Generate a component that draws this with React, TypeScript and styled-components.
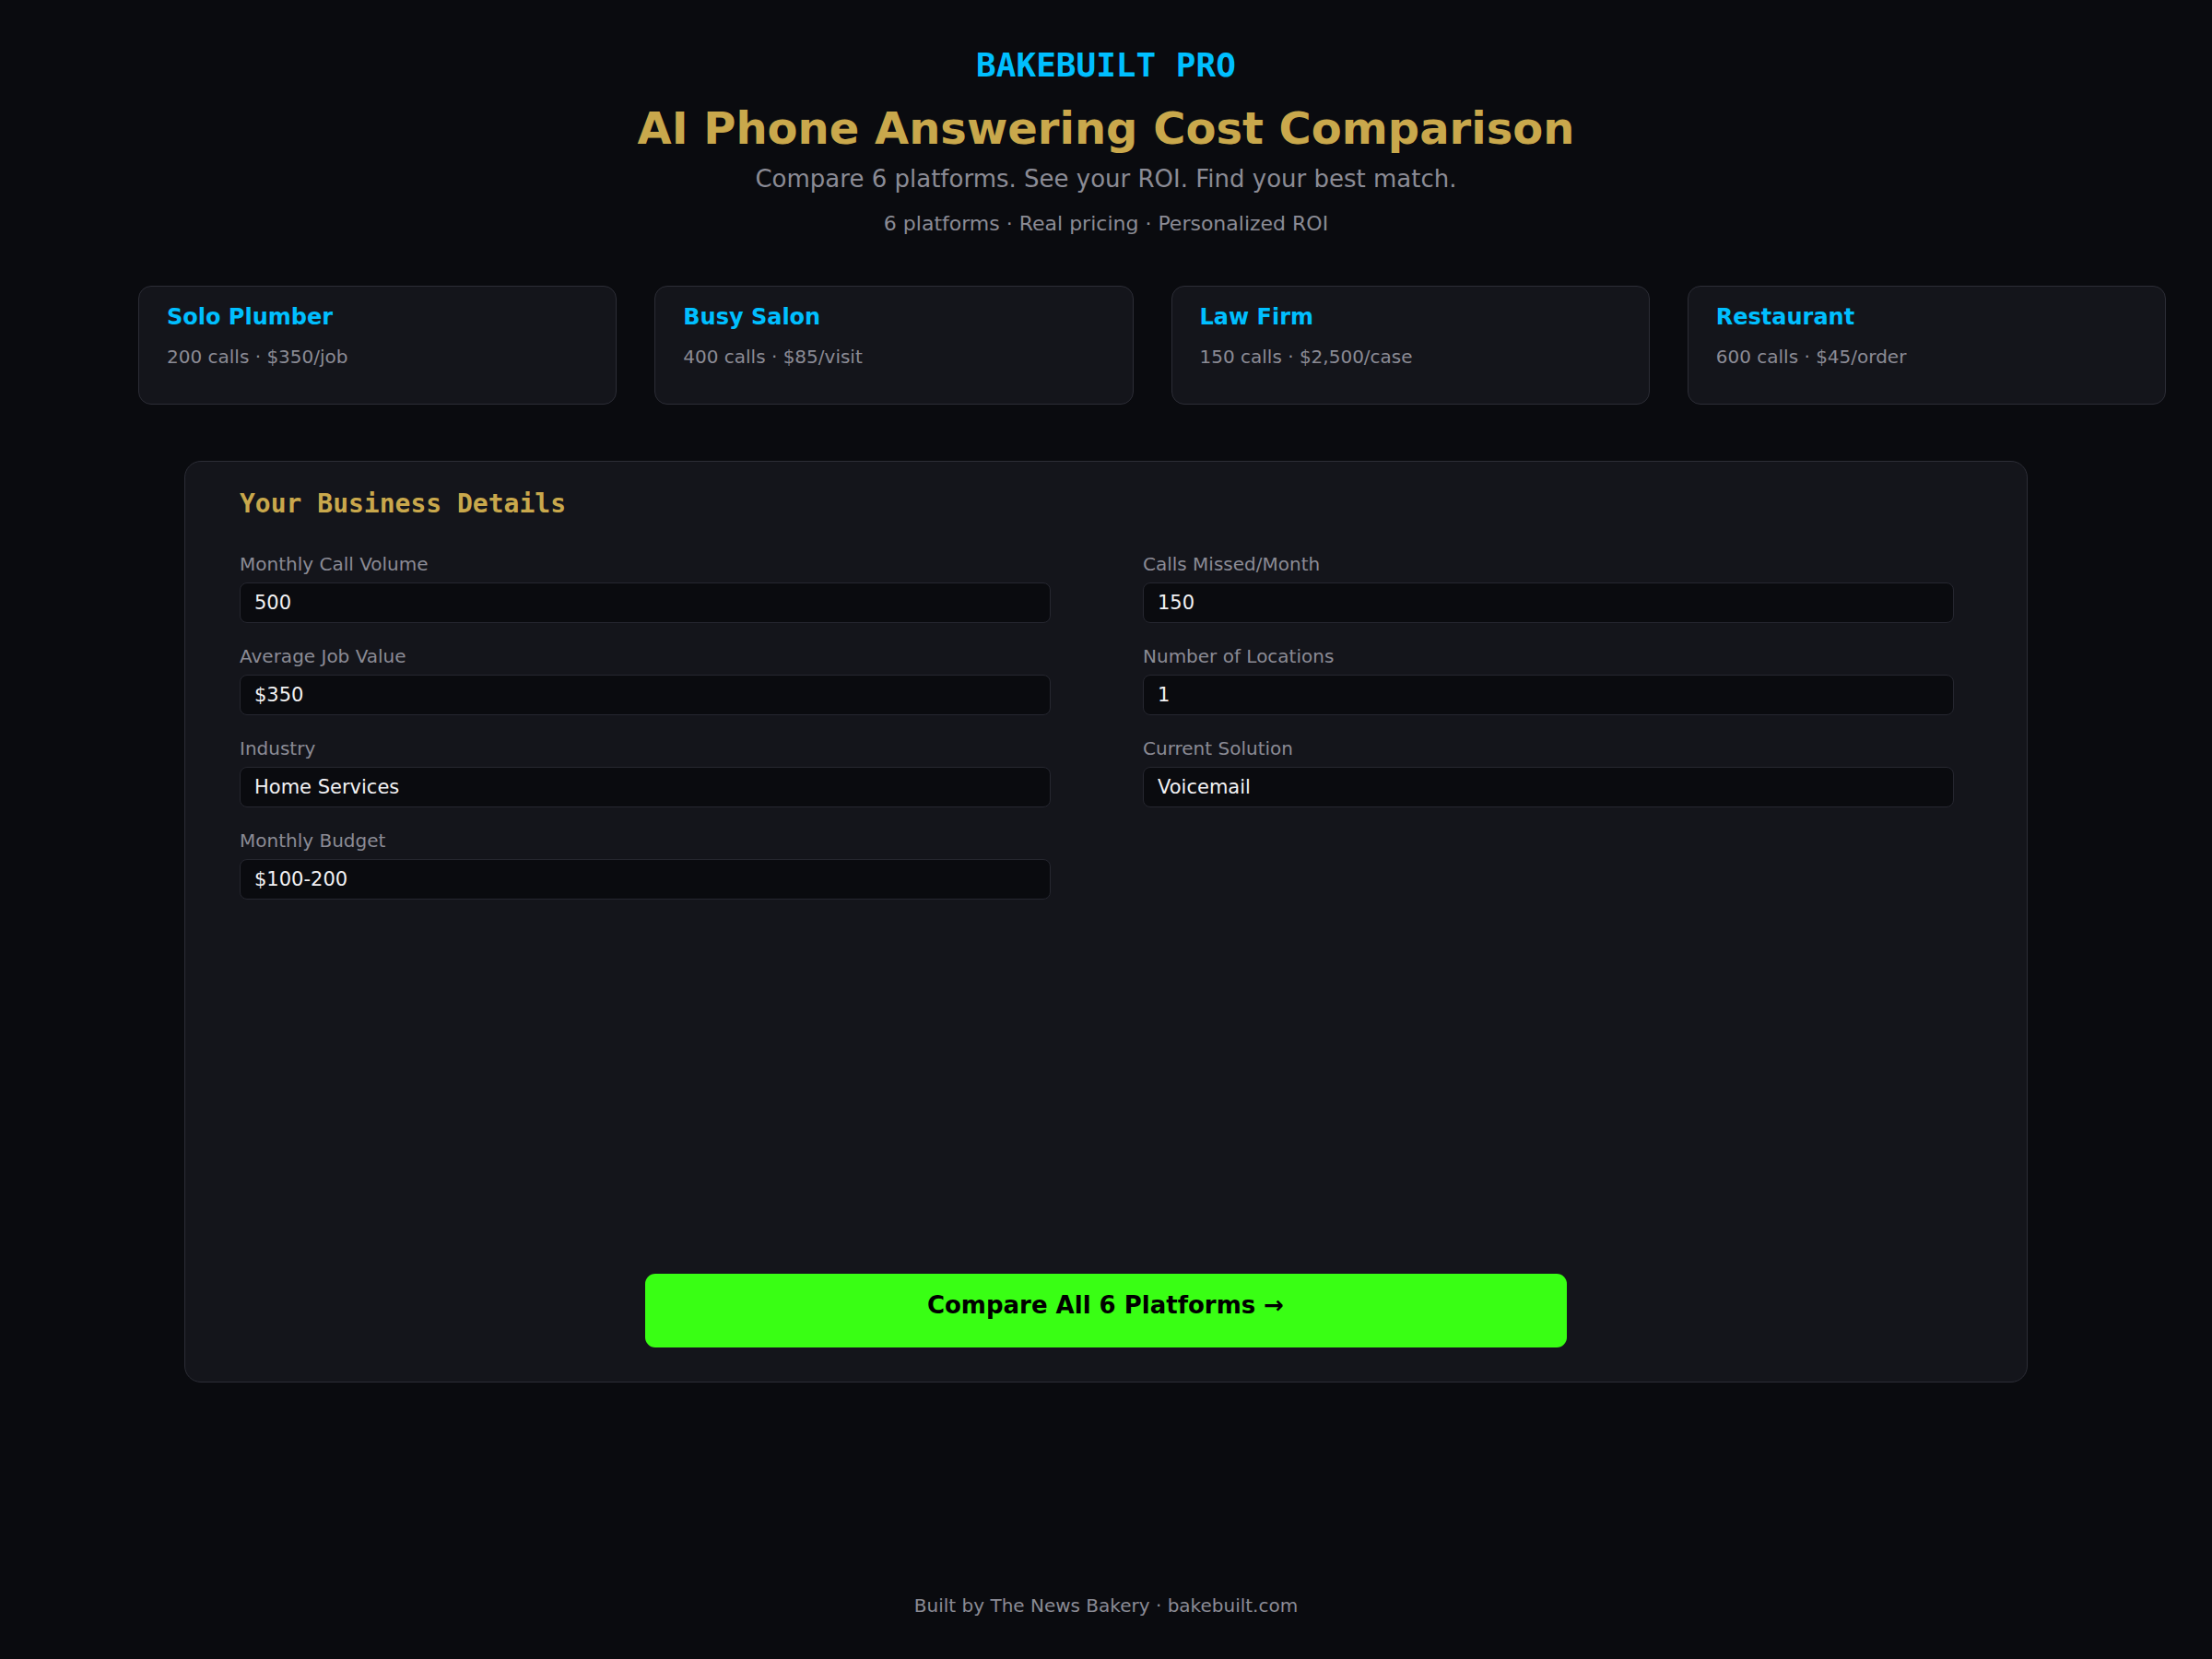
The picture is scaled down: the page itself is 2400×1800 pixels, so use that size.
import styled, { createGlobalStyle } from "styled-components";

const GlobalStyle = createGlobalStyle`
  * {
    box-sizing: border-box;
  }
  html, body {
    margin: 0;
    padding: 0;
    background: #0a0b0f;
  }
  body {
    font-family: "DejaVu Sans", "Liberation Sans", sans-serif;
    color: #e8e8ec;
    line-height: normal;
  }
`;

const Page = styled.div`
  min-height: 1800px;
  padding: 50px 0 40px;
  display: flex;
  flex-direction: column;
  align-items: center;
`;

const Brand = styled.div`
  font-family: "DejaVu Sans Mono", "Liberation Mono", monospace;
  font-weight: 700;
  font-size: 36px;
  color: #00bfff;
`;

const Title = styled.h1`
  margin: 19.5px 0 0;
  font-size: 48px;
  font-weight: 700;
  color: #c9a84c;
`;

const Subtitle = styled.p`
  margin: 12px 0 0;
  font-size: 26px;
  color: #8b8b95;
`;

const Tagline = styled.p`
  margin: 21px 0 0;
  font-size: 22px;
  color: #8b8b95;
`;

const Presets = styled.div`
  margin: 55px 0 0 100px;
  width: 2200px;
  display: grid;
  grid-template-columns: repeat(4, 1fr);
  gap: 41px;
`;

const PresetCard = styled.div`
  background: #14151b;
  border: 1px solid #2c2d36;
  border-radius: 14px;
  padding: 19px 30px 39px;
  cursor: pointer;
`;

const PresetName = styled.div`
  font-size: 24px;
  font-weight: 700;
  color: #00bfff;
`;

const PresetInfo = styled.div`
  margin-top: 17px;
  font-size: 20px;
  color: #8b8b95;
`;

const Panel = styled.form`
  margin-top: 61px;
  width: 2000px;
  min-height: 1000px;
  background: #14151b;
  border: 1px solid #2c2d36;
  border-radius: 18px;
  padding: 29px 60px 37px 59px;
  display: flex;
  flex-direction: column;
`;

const PanelTitle = styled.h2`
  margin: 0;
  font-family: "DejaVu Sans Mono", "Liberation Mono", monospace;
  font-size: 28px;
  font-weight: 700;
  color: #c9a84c;
`;

const Fields = styled.div`
  margin-top: 37px;
  display: grid;
  grid-template-columns: 880px 880px;
  grid-auto-flow: column;
  grid-template-rows: repeat(4, auto);
  column-gap: 100px;
  row-gap: 24px;
`;

const Field = styled.label`
  display: flex;
  flex-direction: column;
`;

const Label = styled.span`
  font-size: 20px;
  color: #8b8b95;
  margin-bottom: 8px;
`;

const Input = styled.input`
  width: 100%;
  background: #0a0b0f;
  border: 1px solid #262730;
  border-radius: 8px;
  padding: 9px 15px;
  font-family: "DejaVu Sans", "Liberation Sans", sans-serif;
  font-size: 21px;
  line-height: normal;
  color: #f2f2f4;
  outline: none;
`;

const Submit = styled.button`
  margin-top: auto;
  align-self: center;
  width: 1000px;
  height: 80px;
  padding: 20px 0 32px;
  border: none;
  border-radius: 11px;
  background: #39ff14;
  color: #000;
  font-family: "DejaVu Sans", "Liberation Sans", sans-serif;
  font-size: 26px;
  font-weight: 700;
  line-height: 28px;
  cursor: pointer;
  &:hover {
    opacity: 0.9;
  }
`;

const Footer = styled.footer`
  margin-top: 230px;
  font-size: 20px;
  color: #8b8b95;
`;

const presets = [
  { name: "Solo Plumber", info: "200 calls · $350/job" },
  { name: "Busy Salon", info: "400 calls · $85/visit" },
  { name: "Law Firm", info: "150 calls · $2,500/case" },
  { name: "Restaurant", info: "600 calls · $45/order" },
];

const leftFields = [
  { label: "Monthly Call Volume", value: "500" },
  { label: "Average Job Value", value: "$350" },
  { label: "Industry", value: "Home Services" },
  { label: "Monthly Budget", value: "$100-200" },
];

const rightFields = [
  { label: "Calls Missed/Month", value: "150" },
  { label: "Number of Locations", value: "1" },
  { label: "Current Solution", value: "Voicemail" },
];

export default function App() {
  const onSubmit = (e: React.FormEvent<HTMLFormElement>) => {
    e.preventDefault();
  };

  return (
    <>
      <GlobalStyle />
      <Page>
        <Brand>BAKEBUILT PRO</Brand>
        <Title>AI Phone Answering Cost Comparison</Title>
        <Subtitle>Compare 6 platforms. See your ROI. Find your best match.</Subtitle>
        <Tagline>6 platforms · Real pricing · Personalized ROI</Tagline>

        <Presets>
          {presets.map((p) => (
            <PresetCard key={p.name}>
              <PresetName>{p.name}</PresetName>
              <PresetInfo>{p.info}</PresetInfo>
            </PresetCard>
          ))}
        </Presets>

        <Panel onSubmit={onSubmit}>
          <PanelTitle>Your Business Details</PanelTitle>
          <Fields>
            {leftFields.map((f) => (
              <Field key={f.label}>
                <Label>{f.label}</Label>
                <Input defaultValue={f.value} />
              </Field>
            ))}
            {rightFields.map((f) => (
              <Field key={f.label}>
                <Label>{f.label}</Label>
                <Input defaultValue={f.value} />
              </Field>
            ))}
          </Fields>
          <Submit type="submit">Compare All 6 Platforms →</Submit>
        </Panel>

        <Footer>Built by The News Bakery · bakebuilt.com</Footer>
      </Page>
    </>
  );
}
